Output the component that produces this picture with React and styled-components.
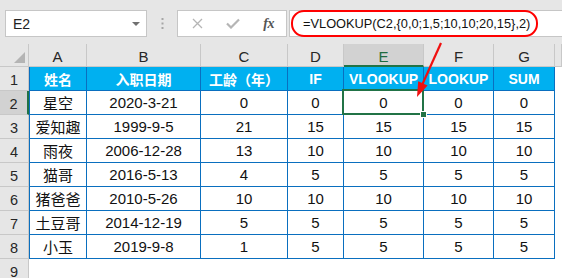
import React from "react";
import styled, { createGlobalStyle, css } from "styled-components";

const Global = createGlobalStyle`
  html, body { margin: 0; padding: 0; background: #fff; overflow: hidden; }
  body { font-family: "Liberation Sans", "Noto Sans CJK SC", sans-serif; }
`;

const BLUE = "#0a6fbf";
const GREEN = "#217346";
const HEAD_BG = "#e6e6e6";
const HEAD_LINE = "#c8c8c8";

const Page = styled.div`
  position: relative;
  width: 562px;
  height: 278px;
  overflow: hidden;
  background: #fff;
`;

const FormulaBar = styled.div`
  height: 44px;
  box-sizing: border-box;
  padding: 10px 0 0 5px;
  background: ${HEAD_BG};
  display: flex;
  align-items: flex-start;
`;

const Field = styled.div`
  height: 27px;
  box-sizing: border-box;
  background: #fff;
  border: 1px solid #c6c6c6;
  display: flex;
  align-items: center;
`;

const NameBox = styled(Field)`
  width: 142px;
  padding: 0 6px 0 7px;
  justify-content: space-between;
  font-size: 14px;
  color: #222;
`;

const Caret = styled.span`
  width: 0;
  height: 0;
  border-left: 4px solid transparent;
  border-right: 4px solid transparent;
  border-top: 4px solid #707070;
  margin-top: 1px;
`;

const Grip = styled.div`
  width: 30px;
  height: 27px;
  display: flex;
  align-items: center;
  justify-content: center;
`;

const FxBox = styled(Field)`
  width: 110px;
  padding: 0 12px 0 14px;
  justify-content: space-between;
`;

const Fx = styled.span`
  font-family: "Liberation Serif", serif;
  font-style: italic;
  font-weight: bold;
  font-size: 14px;
  color: #555;
  letter-spacing: -0.5px;
`;

const FormulaInput = styled(Field)`
  flex: 1;
  margin-left: 2px;
  border-right: none;
  padding-left: 1px;
`;

const Highlight = styled.span`
  height: 27px;
  box-sizing: border-box;
  margin-top: -1px;
  border: 2px solid #f00;
  border-radius: 13px;
  padding: 0 0 0 10px;
  display: flex;
  align-items: center;
  font-size: 12.8px;
  white-space: nowrap;
  color: #111;
  width: 247px;
`;

const Sheet = styled.div`
  display: grid;
  grid-template-columns: 29px 58px 114px 87px 56px 80px 70px 61px 1fr;
  grid-template-rows: 23px repeat(9, 24px);
  font-size: 15px;
`;

const ColHead = styled.div`
  box-sizing: border-box;
  background: ${(p) => (p.$active ? "#d2d2d2" : HEAD_BG)};
  border-right: 1px solid ${HEAD_LINE};
  border-bottom: ${(p) => (p.$active ? `2px solid ${GREEN}` : `1px solid ${HEAD_LINE}`)};
  display: flex;
  align-items: center;
  justify-content: center;
  padding-top: 3px;
  color: ${(p) => (p.$active ? "#1e6b40" : "#262626")};
  font-size: 15px;
`;

const Corner = styled(ColHead)`
  position: relative;
  &::after {
    content: "";
    position: absolute;
    right: 3px;
    bottom: 3px;
    width: 0;
    height: 0;
    border-left: 11px solid transparent;
    border-bottom: 11px solid #b4b4b4;
  }
`;

const RowHead = styled.div`
  box-sizing: border-box;
  background: ${(p) => (p.$active ? "#d2d2d2" : HEAD_BG)};
  border-right: ${(p) => (p.$active ? `2px solid ${GREEN}` : `1px solid ${HEAD_LINE}`)};
  border-bottom: 1px solid ${HEAD_LINE};
  display: flex;
  align-items: center;
  justify-content: center;
  padding-top: 2px;
  color: #262626;
  font-size: 14.5px;
`;

const Cell = styled.div`
  position: relative;
  box-sizing: border-box;
  border-right: 1px solid ${BLUE};
  border-bottom: 1px solid ${BLUE};
  ${(p) => p.$first && css`border-left: 1px solid ${BLUE};`}
  display: flex;
  align-items: center;
  justify-content: center;
  white-space: nowrap;
  color: #111;
  ${(p) =>
    p.$head &&
    css`
      background: #00b0f0;
      color: #fff;
      font-weight: bold;
      font-size: 14px;
    `}
  ${(p) =>
    p.$selected &&
    css`
      z-index: 1;
      &::after {
        content: "";
        position: absolute;
        top: -2px;
        left: -2px;
        right: -1px;
        bottom: -1px;
        border: 2px solid ${GREEN};
      }
      &::before {
        content: "";
        position: absolute;
        right: -4px;
        bottom: -4px;
        width: 5px;
        height: 5px;
        background: ${GREEN};
        border: 1px solid #fff;
        z-index: 2;
      }
    `}
`;

const Blank = styled.div`
  background: #fff;
`;

const Arrow = styled.svg`
  position: absolute;
  left: 0;
  top: 0;
  pointer-events: none;
  z-index: 5;
`;

const header = ["姓名", "入职日期", "工龄（年）", "IF", "VLOOKUP", "LOOKUP", "SUM"];
const rows = [
  ["星空", "2020-3-21", 0, 0, 0, 0, 0],
  ["爱知趣", "1999-9-5", 21, 15, 15, 15, 15],
  ["雨夜", "2006-12-28", 13, 10, 10, 10, 10],
  ["猫哥", "2016-5-13", 4, 5, 5, 5, 5],
  ["猪爸爸", "2010-5-26", 10, 10, 10, 10, 10],
  ["土豆哥", "2014-12-19", 5, 5, 5, 5, 5],
  ["小玉", "2019-9-8", 1, 5, 5, 5, 5],
];
const letters = ["A", "B", "C", "D", "E", "F", "G", ""];

export default function App() {
  return (
    <Page>
      <Global />
      <FormulaBar>
        <NameBox>
          <span>E2</span>
          <Caret />
        </NameBox>
        <Grip>
          <svg width="3" height="11" viewBox="0 0 3 11">
            <rect x="0.5" y="0" width="2" height="2" fill="#a6a6a6" />
            <rect x="0.5" y="4.5" width="2" height="2" fill="#a6a6a6" />
            <rect x="0.5" y="9" width="2" height="2" fill="#a6a6a6" />
          </svg>
        </Grip>
        <FxBox>
          <svg width="11" height="11" viewBox="0 0 11 11">
            <path d="M1 1 L10 10 M10 1 L1 10" stroke="#b5b5b5" strokeWidth="1.3" fill="none" />
          </svg>
          <svg width="14" height="11" viewBox="0 0 14 11">
            <path d="M1 5.5 L5 9.5 L13 1.5" stroke="#b5b5b5" strokeWidth="2.2" fill="none" />
          </svg>
          <Fx>fx</Fx>
        </FxBox>
        <FormulaInput>
          <Highlight>=VLOOKUP(C2,{"{"}0,0;1,5;10,10;20,15{"}"},2)</Highlight>
        </FormulaInput>
      </FormulaBar>
      <Sheet>
        <Corner />
        {letters.map((l, i) => (
          <ColHead key={"c" + i} $active={l === "E"}>
            {l}
          </ColHead>
        ))}
        <RowHead>1</RowHead>
        {header.map((h, i) => (
          <Cell key={"h" + i} $head $first={i === 0}>
            {h}
          </Cell>
        ))}
        <Blank />
        {rows.map((r, ri) => (
          <React.Fragment key={"r" + ri}>
            <RowHead $active={ri === 0}>{ri + 2}</RowHead>
            {r.map((v, ci) => (
              <Cell key={ci} $first={ci === 0} $selected={ri === 0 && ci === 4}>
                {v}
              </Cell>
            ))}
            <Blank />
          </React.Fragment>
        ))}
        <RowHead>9</RowHead>
        <Blank style={{ gridColumn: "2 / -1" }} />
      </Sheet>
      <Arrow width="562" height="278" viewBox="0 0 562 278">
        <line x1="441" y1="43" x2="422.5" y2="84" stroke="#f01010" strokeWidth="2.2" />
        <polygon points="417,97 427.6,85.6 418.2,81.2" fill="#f01010" />
      </Arrow>
    </Page>
  );
}
